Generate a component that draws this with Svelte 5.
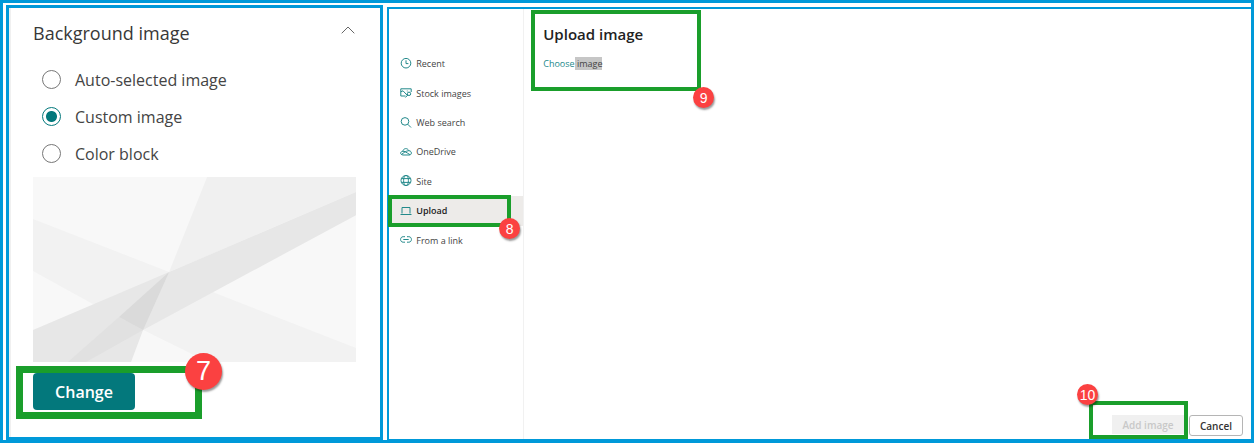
<script lang="ts">
	type Source = { id: string; label: string };

	const options = ["Auto-selected image", "Custom image", "Color block"];
	const sources: Source[] = [
		{ id: "recent", label: "Recent" },
		{ id: "stock", label: "Stock images" },
		{ id: "search", label: "Web search" },
		{ id: "onedrive", label: "OneDrive" },
		{ id: "site", label: "Site" },
		{ id: "upload", label: "Upload" },
		{ id: "link", label: "From a link" }
	];

	let background = $state("Custom image");
	let current = $state("upload");
</script>

{#snippet icon(id: string)}
	<svg class="icon" viewBox="0 0 12 12" aria-hidden="true">
		{#if id === "recent"}
			<circle cx="6" cy="5.2" r="4.8" />
			<path d="M6 2.3V5.6H8.4" />
		{:else if id === "stock"}
			<path d="M5.5 9H.8V1.8H11.2V5M.8 4.8L3 3.8 7.5 8.6M6.8 4H7.6" />
			<circle cx="9" cy="6.8" r="1.7" />
			<path d="M7.8 8L5.4 10.5" />
		{:else if id === "search"}
			<circle cx="5" cy="4.4" r="3.8" />
			<path d="M7.7 7.2L11 10.5" />
		{:else if id === "onedrive"}
			<path d="M3 9C-.2 8.7 0 5.5 2.7 5.4 3.4 2 7.5 1.6 8.8 4.7 12 4.7 12.2 8.8 9.5 9ZM2.7 5.4C4.4 4.7 6 6.2 10 8.7M1.5 8.4C3.6 7 5.8 4.8 8.8 4.7" />
		{:else if id === "site"}
			<circle cx="6" cy="5.5" r="5" />
			<ellipse cx="6" cy="5.5" rx="2.4" ry="5" />
			<path d="M1.3 3.6H10.7M1.3 7.4H10.7" />
		{:else if id === "upload"}
			<path d="M2 8.5V2.5H10V8.5M.5 9.5H11.5" />
		{:else}
			<path d="M5 2.7H3.2C-.3 2.7-.3 8.2 3.2 8.2H5M7 2.7H8.8C12.3 2.7 12.3 8.2 8.8 8.2H7M3.3 5.5H8.7" />
		{/if}
	</svg>
{/snippet}

<main class="frame">
	<section class="panel settings">
		<header>
			<h2>Background image</h2>
			<button class="collapse" aria-label="Collapse">
				<svg viewBox="0 0 14 8" aria-hidden="true"><path d="M.7 7.3L7 1L13.3 7.3" /></svg>
			</button>
		</header>
		<div class="options">
			{#each options as option}
				<label>
					<input type="radio" name="background" value={option} bind:group={background} />
					{option}
				</label>
			{/each}
		</div>
		<svg class="preview" viewBox="0 0 323 185" preserveAspectRatio="none" aria-hidden="true">
			<path fill="#f8f8f8" d="M0 0H323V185H0Z" />
			<path fill="#f0f0f0" d="M174 0H323V15L136 95Z" />
			<path fill="#f2f2f2" d="M0 42L136 95L182 116L323 171V185H172L110 153L58 126L0 94Z" />
			<path fill="#f8f8f8" d="M110 153L157 176L172 185H98Z" />
			<path fill="#e7e7e7" d="M0 153L136 95L323 15V38L110 153L98 185H0Z" />
			<path fill="#e1e1e1" d="M86 140L110 153L53 185H35Z" />
			<path fill="#dadada" d="M136 95L110 153L86 140Z" />
		</svg>
		<div class="mark change-mark">
			<button class="change">Change</button>
			<span class="badge large">7</span>
		</div>
	</section>

	<section class="panel picker">
		<nav>
			{#each sources as source}
				<a href="#{source.id}" class:selected={current === source.id} onclick={() => (current = source.id)}>
					{@render icon(source.id)}
					{source.label}
					{#if source.id === "upload"}
						<span class="mark upload-mark"></span>
						<span class="badge">8</span>
					{/if}
				</a>
			{/each}
		</nav>
		<div class="content">
			<div class="mark choose-mark">
				<h1>Upload image</h1>
				<a href="#choose">Choose<span class="highlight">&nbsp;image</span></a>
				<span class="badge">9</span>
			</div>
			<footer>
				<div class="mark add-mark">
					<button class="add" disabled>Add image</button>
					<span class="badge">10</span>
				</div>
				<button class="cancel">Cancel</button>
			</footer>
		</div>
	</section>
</main>

<style>
	:global(body) {
		margin: 0;
	}
	* {
		box-sizing: border-box;
	}
	.frame {
		min-height: 100vh;
		display: grid;
		grid-template-columns: 30.3% 1fr;
		gap: 4px;
		padding: 2px 0 0 3px;
		border: 3px solid #0099d9;
		background: #fff;
		font-family: "Open Sans", "Noto Sans", sans-serif;
		color: #444;
	}
	h1, h2 {
		margin: 0;
	}
	button {
		padding: 0;
		font: inherit;
		cursor: pointer;
	}
	svg {
		display: block;
	}
	.settings {
		padding: 10px 24px 0;
		border: 3px solid #0099d9;
		box-shadow: inset 2px 0 #f0f0f0;
	}
	header {
		display: flex;
		justify-content: space-between;
		align-items: center;
		height: 30px;
		margin-bottom: 13px;
	}
	h2 {
		font-size: 18px;
		font-weight: 400;
		color: #383838;
	}
	.collapse {
		margin: 0 1px 6px 0;
		border: none;
		background: none;
	}
	.collapse svg {
		width: 14px;
		height: 8px;
		fill: none;
		stroke: #666;
	}
	.options label {
		display: flex;
		align-items: center;
		gap: 14px;
		height: 37px;
		padding-left: 9px;
		font-size: 16px;
	}
	input {
		appearance: none;
		width: 19px;
		height: 19px;
		margin: 0;
		border: 1px solid #777;
		border-radius: 50%;
	}
	input:checked {
		border-color: #03787c;
		background: radial-gradient(circle, #03787c 5px, #fff 6px);
	}
	.preview {
		width: 100%;
		height: 185px;
		margin: 5px 0 4px;
	}
	.mark {
		position: relative;
		border: 4px solid #1a9e2b;
	}
	.badge {
		position: absolute;
		display: grid;
		place-items: center;
		width: 21px;
		height: 21px;
		border-radius: 50%;
		background: #fb4141;
		box-shadow: 1px 2px 2px #0006;
		color: #fff;
		font: 14px "Liberation Sans", sans-serif;
	}
	.change-mark {
		width: 186px;
		height: 53px;
		margin-left: -17px;
		padding-left: 10px;
		border-width: 7px;
	}
	.change {
		width: 102px;
		height: 37px;
		border: none;
		border-radius: 4px;
		background: #03787c;
		color: #fff;
		font-size: 16px;
		font-weight: 600;
	}
	.large {
		top: -20px;
		right: -27px;
		width: 37px;
		height: 37px;
		font-size: 27px;
	}
	.picker {
		display: flex;
		margin-top: 2px;
		border: solid #0099d9;
		border-width: 2px 0 1px 2px;
	}
	nav {
		flex: 0 0 134px;
		display: grid;
		grid-template-rows: repeat(7, 1fr);
		align-self: stretch;
		height: 246px;
		padding-top: 40px;
	}
	nav a {
		position: relative;
		display: flex;
		align-items: center;
		gap: 4px;
		padding-left: 11px;
		font-size: 9px;
		color: #444;
		text-decoration: none;
	}
	nav .selected {
		background: #edebe9;
		color: #222;
		font-weight: 600;
	}
	.icon {
		width: 12px;
		height: 12px;
		fill: none;
		stroke: #23898b;
	}
	.upload-mark {
		position: absolute;
		inset: -1px 12px -1px -1px;
	}
	nav .badge {
		top: 22px;
		right: 3px;
		z-index: 1;
		font-weight: 400;
	}
	.content {
		flex: 1;
		display: flex;
		flex-direction: column;
		justify-content: space-between;
		border-left: 1px solid #f1f1f1;
	}
	.choose-mark {
		width: 170px;
		height: 81px;
		margin: 1px 0 0 7px;
		padding: 10px 8px;
	}
	h1 {
		margin-bottom: 13px;
		font-size: 15px;
		line-height: 20px;
		font-weight: 600;
		color: #222;
	}
	.choose-mark a {
		display: block;
		font-size: 9px;
		line-height: 14px;
		color: #23898b;
		text-decoration: none;
	}
	.highlight {
		background: #c6c6c6;
		color: #444;
	}
	.choose-mark .badge {
		right: -17px;
		bottom: -21px;
	}
	footer {
		display: flex;
		justify-content: flex-end;
		gap: 1px;
		padding-right: 8px;
		font-size: 10px;
	}
	.add-mark {
		width: 99px;
		height: 38px;
		padding: 10px 0 0 19px;
	}
	.add {
		width: 72px;
		height: 19px;
		border: none;
		background: #f0f0f0;
		color: #c8c8c8;
		font-weight: 600;
	}
	.add-mark .badge {
		top: -21px;
		left: -16px;
	}
	.cancel {
		width: 54px;
		height: 21px;
		margin-top: 14px;
		border: 1px solid #b5b5b5;
		border-radius: 3px;
		background: #fff;
		color: #333;
		font-weight: 600;
	}
</style>
